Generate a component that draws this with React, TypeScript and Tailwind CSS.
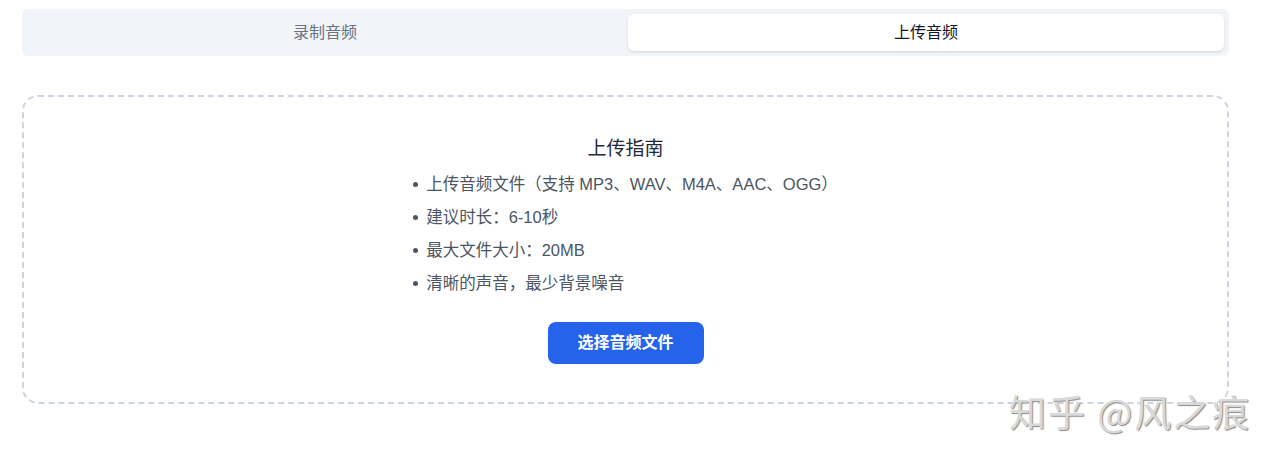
import React from "react";

export default function App() {
  const items = [
    "上传音频文件（支持 MP3、WAV、M4A、AAC、OGG）",
    "建议时长：6-10秒",
    "最大文件大小：20MB",
    "清晰的声音，最少背景噪音",
  ];
  return (
    <div
      className="relative w-[1280px] h-[466px] bg-white overflow-hidden"
      style={{ fontFamily: '"Liberation Sans", "Noto Sans CJK SC", sans-serif' }}
    >
      <div className="pt-[9px] pl-[22px] w-[1229px]">
        <div className="flex h-[47px] w-[1207px] rounded-md bg-[#f1f5f9] p-[5px] gap-[5px]">
          <div className="flex-1 flex items-center justify-center text-[16px] text-[#6b7280]">
            录制音频
          </div>
          <div className="flex-1 flex items-center justify-center text-[16px] text-[#111827] bg-white rounded-md shadow-sm">
            上传音频
          </div>
        </div>
        <div className="mt-[39px] h-[309px] w-[1207px] rounded-2xl border-2 border-dashed border-[#cbd5e1] flex flex-col items-center pt-[39px]">
          <div className="text-[19px] text-[#1f2937] leading-[26px]">上传指南</div>
          <ul className="mt-[6px] text-[16.5px] text-[#4b5563] leading-[33px]">
            {items.map((t) => (
              <li key={t} className="flex items-center">
                <span className="mr-[8px] w-[5px] h-[5px] rounded-full bg-[#4b5563]" />
                {t}
              </li>
            ))}
          </ul>
          <button className="mt-[22px] h-[42px] w-[156px] rounded-lg bg-[#2563eb] text-white text-[16px] font-bold">
            选择音频文件
          </button>
        </div>
      </div>
      <div
        className="absolute left-[1009px] top-[384px] text-[37px] tracking-[2px] text-[#d9d9d9] whitespace-nowrap"
        style={{ textShadow: "1px 1px 1px #8a8a8a", fontFamily: '"Noto Sans CJK SC", sans-serif' }}
      >
        知乎 @风之痕
      </div>
    </div>
  );
}
